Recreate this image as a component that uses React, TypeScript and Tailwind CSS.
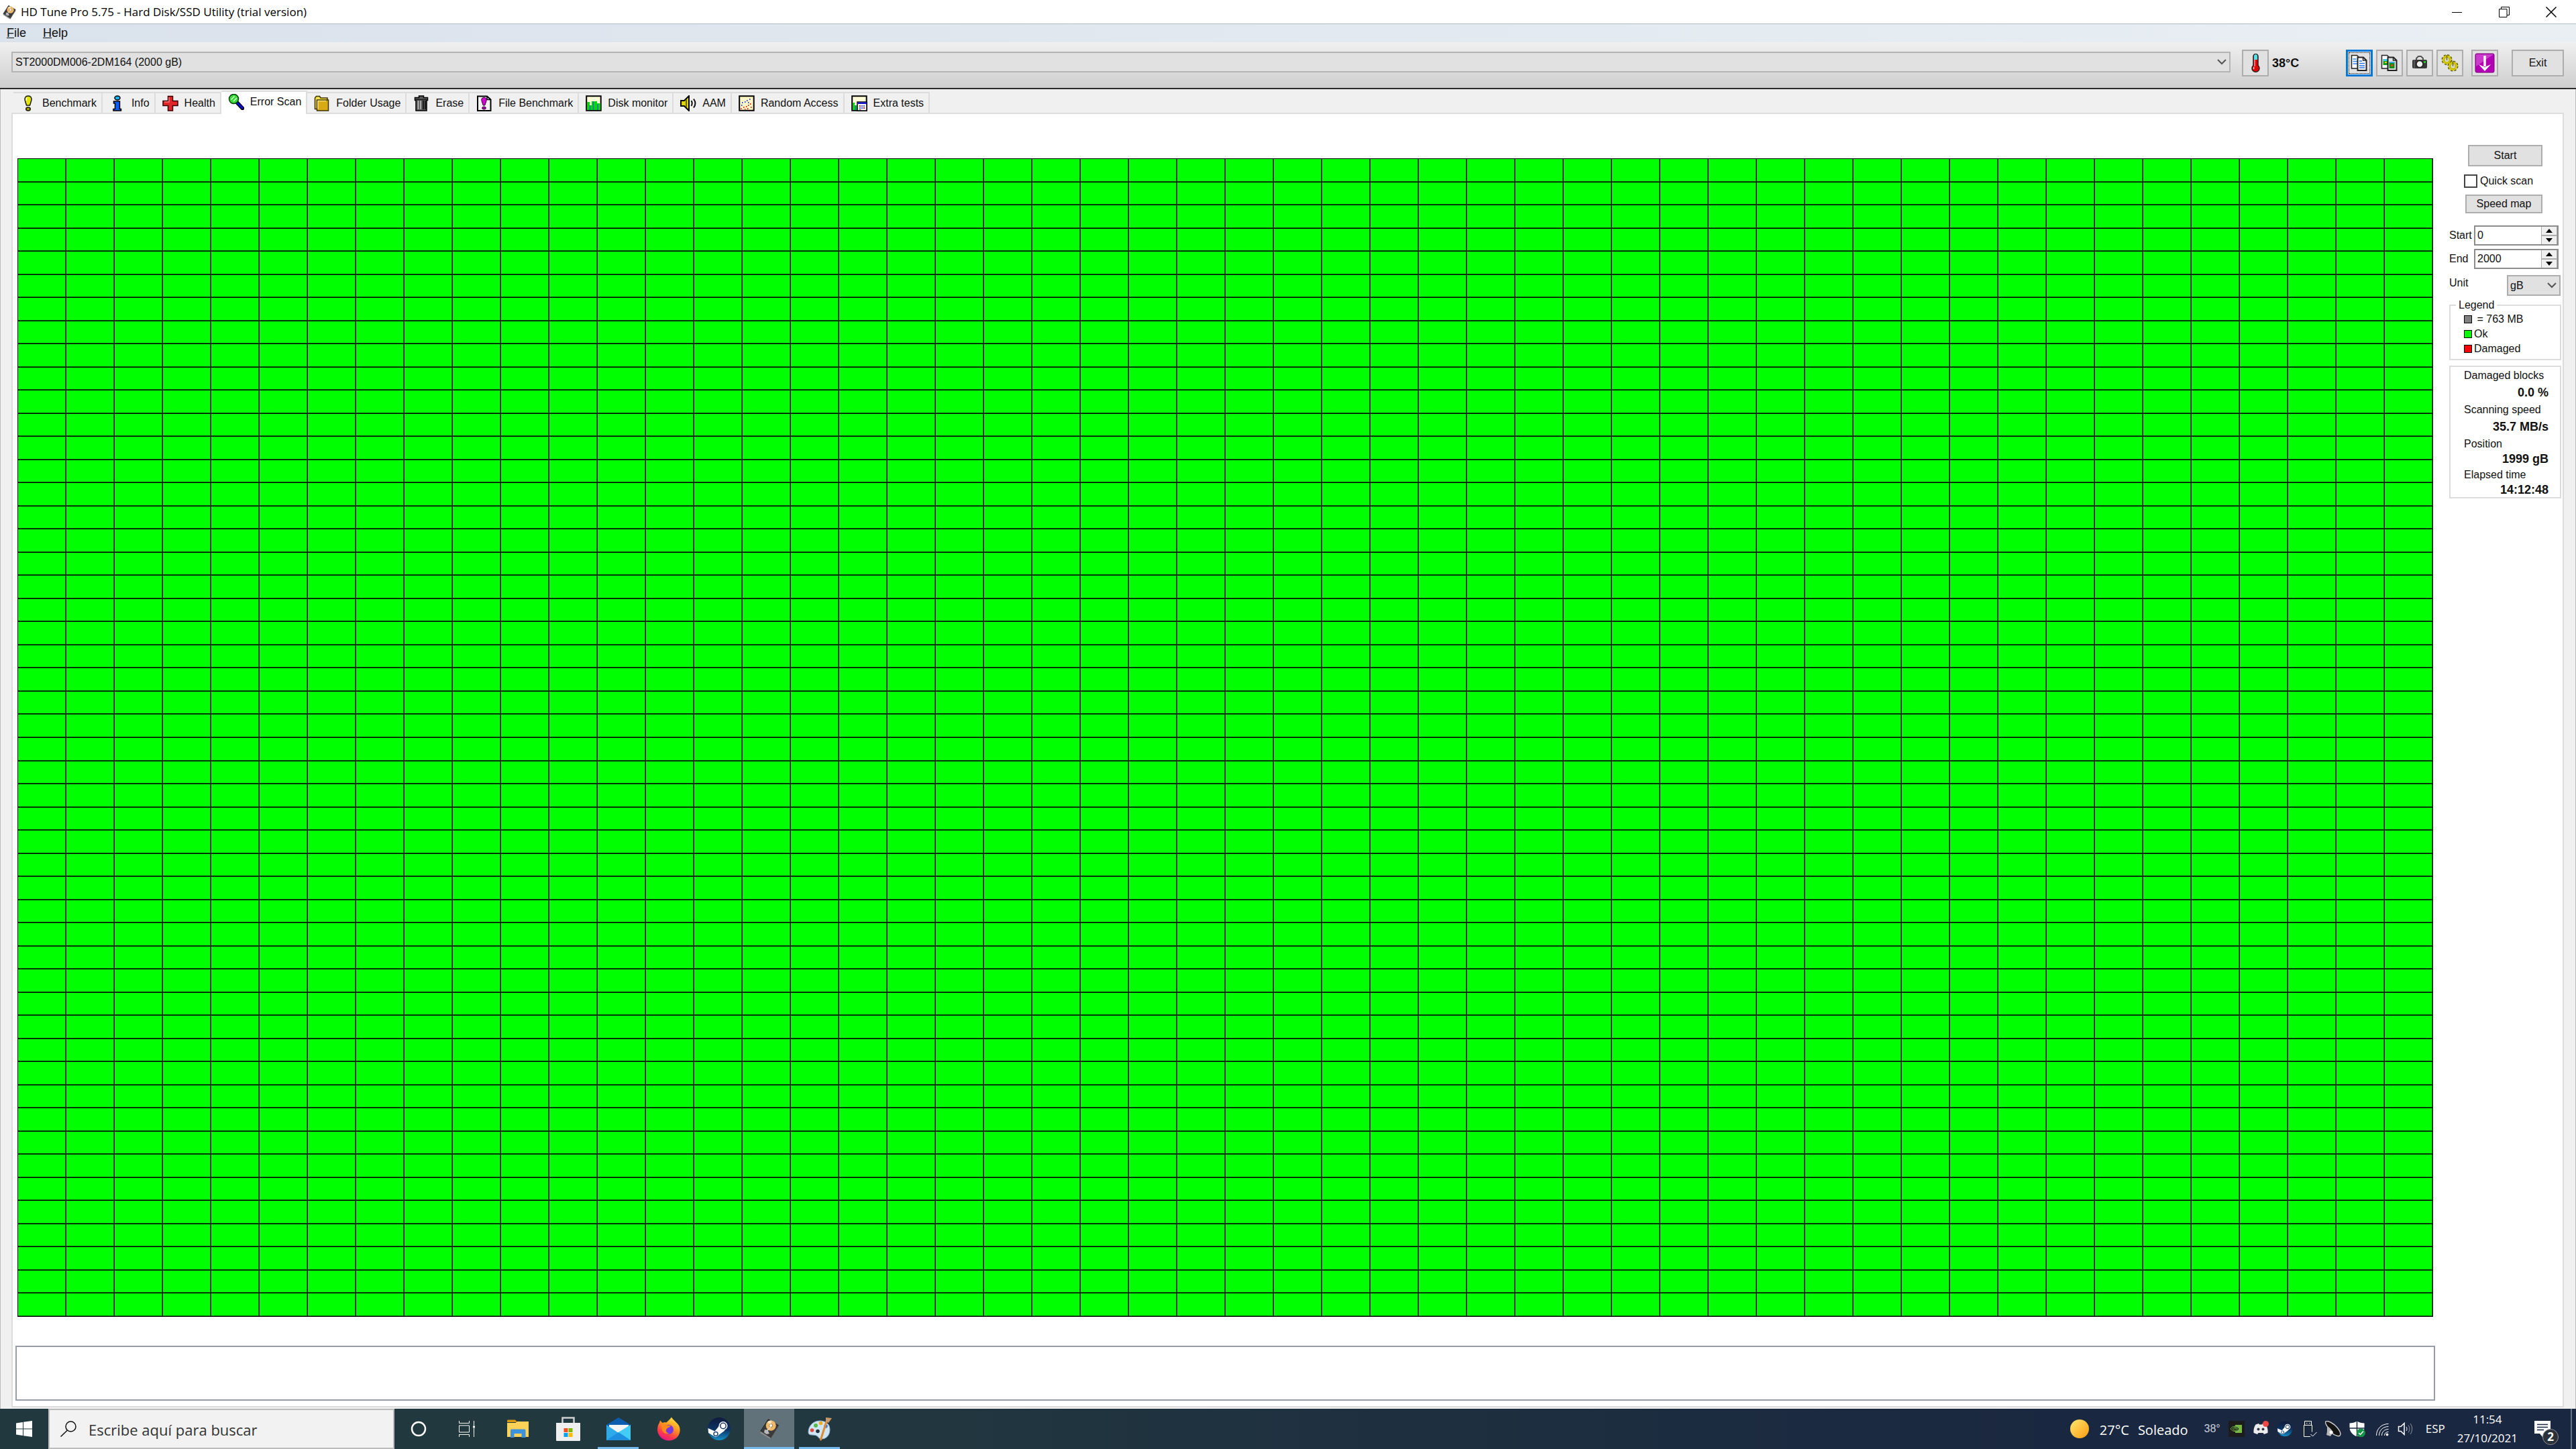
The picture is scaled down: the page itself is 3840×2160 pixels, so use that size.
import { useState, type ReactNode } from "react";
import clsx from "clsx";

const COLS = 50;
const ROWS = 50;

/* ---------- tab icons ---------- */

function ExclamationIcon() {
  return (
    <svg viewBox="0 0 24 24" className="h-6 w-6">
      <path d="M12 1c4 0 5.500 3 4.800 6.500L14.500 15h-5L7.200 7.500C6.500 4 8 1 12 1z" fill="#e6e600" stroke="#1a1a00" strokeWidth="1.500" />
      <path d="M10 3.500c-1 1-1 3-.5 4.500" stroke="#fff" strokeWidth="1.500" fill="none" />
      <ellipse cx="12" cy="20.500" rx="3.200" ry="2.500" fill="#a8a800" stroke="#1a1a00" strokeWidth="1.500" />
    </svg>
  );
}

function InfoIcon() {
  return (
    <svg viewBox="0 0 24 24" className="h-6 w-6">
      <ellipse cx="12" cy="4" rx="4" ry="3" fill="#1ab2f5" stroke="#000" strokeWidth="1.500" />
      <path d="M6.500 9h9v11.500h2V23H6v-2.500h2.500V12h-2z" fill="#0a5cf5" stroke="#000" strokeWidth="1.500" />
    </svg>
  );
}

function HealthIcon() {
  return (
    <svg viewBox="0 0 24 24" className="h-6 w-6">
      <path d="M8.500 1.500h7v7h7.500v7h-7.500v7.500h-7v-7.500H1v-7h7.500z" fill="#e02626" stroke="#3a0000" strokeWidth="1.500" />
      <path d="M10 3v7H3" fill="none" stroke="#ff7070" strokeWidth="1.500" />
    </svg>
  );
}

function SearchScanIcon() {
  return (
    <svg viewBox="0 0 24 24" className="h-6 w-6">
      <path d="M13.500 13l8 8.500" stroke="#000" strokeWidth="5.500" strokeLinecap="round" />
      <path d="M14 13.500l7 7.500" stroke="#0a0ae0" strokeWidth="3" strokeLinecap="round" />
      <circle cx="8.500" cy="7.500" r="7" fill="#35dd35" stroke="#063c06" strokeWidth="1.500" />
      <path d="M4.500 8.500l5-5M8 11l5-5" stroke="#d8ffd8" strokeWidth="1.500" />
    </svg>
  );
}

function FolderTabIcon() {
  return (
    <svg viewBox="0 0 24 24" className="h-6 w-6">
      <path d="M1.500 20.500V4l2-2.500h5L10 4h10v16.500z" fill="#f5e050" stroke="#3c3000" strokeWidth="1.500" />
      <path d="M4.500 7h17v16h-17z" fill="#d9ab12" stroke="#3c3000" strokeWidth="1.500" />
      <path d="M6 20.500V8.500h12" fill="none" stroke="#f8e27a" strokeWidth="1.500" />
    </svg>
  );
}

function TrashIcon() {
  return (
    <svg viewBox="0 0 24 24" className="h-6 w-6">
      <path d="M8.500 1h7v2.500h6v4h-1.500V23H4V7.500H2.500v-4h6z" fill="#5a5a5a" stroke="#000" strokeWidth="1.500" />
      <path d="M7.500 8v13M11 8v13" stroke="#c4c4c4" strokeWidth="1.500" />
      <path d="M15 8v13M18 8v13" stroke="#1c1c1c" strokeWidth="2" />
      <path d="M3.500 6.500h17" stroke="#1a1a1a" strokeWidth="1.500" />
    </svg>
  );
}

function FileBenchIcon() {
  return (
    <svg viewBox="0 0 24 24" className="h-6 w-6">
      <path d="M2 1.500h14l5.500 5V23H2z" fill="#f2f2f2" stroke="#000" strokeWidth="2" />
      <path d="M16 1.500v5h5.500" fill="none" stroke="#000" strokeWidth="1.500" />
      <path d="M11.500 3.500c3.500 0 4.200 2.500 3.500 5L12.800 15h-2.600L8 8.500c-.7-2.500 0-5 3.500-5z" fill="#d400d4" stroke="#300030" />
      <ellipse cx="11.500" cy="19" rx="2.800" ry="2" fill="#b000b0" stroke="#300030" />
    </svg>
  );
}

function MonitorIcon() {
  return (
    <svg viewBox="0 0 24 24" className="h-6 w-6">
      <path d="M1.200 1.200h21.500v21.500H1.200z" fill="#fffbd6" stroke="#000" strokeWidth="2" />
      <path d="M2 10h4v5h3V9h8v3h5v10H2z" fill="#00dc00" />
      <path d="M6.500 15v7M11.500 9v13M18 13v9" stroke="#3a5ae0" strokeWidth="1.500" />
    </svg>
  );
}

function SpeakerTabIcon() {
  return (
    <svg viewBox="0 0 24 24" className="h-6 w-6">
      <path d="M1 8h5l7-7v22l-7-7H1z" fill="#e0d400" stroke="#000" strokeWidth="2" />
      <path d="M9 6v12" stroke="#6a6400" strokeWidth="2" />
      <path d="M16.500 8c1.500 2.500 1.500 5.500 0 8M20 5.500c3 4 3 9 0 13" fill="none" stroke="#111" strokeWidth="2" />
    </svg>
  );
}

function RandomIcon() {
  return (
    <svg viewBox="0 0 24 24" className="h-6 w-6">
      <path d="M1.200 1.200h21.500v21.500H1.200z" fill="#fff8c4" stroke="#000" strokeWidth="2" />
      <path d="M5 10h1.500v2H5zM9 9h1.500v2H9zM12 7h1.500v2H12zM16 5h1.500v2H16zM4 14h1.500v2H4zM14 10h1.500v2H14z" fill="#2a3cf0" />
      <path d="M3 19h1.500v2H3zM7 17h1.500v2H7zM11 16h1.500v2H11zM14 14h1.500v2H14zM17 12h1.500v2H17zM9 20h1.500v1.500H9zM18 17h1.500v2H18zM13 19h1.500v2H13z" fill="#f02020" />
    </svg>
  );
}

function ExtraIcon() {
  return (
    <svg viewBox="0 0 24 24" className="h-6 w-6">
      <path d="M1.200 1.200h21.500v21.500H1.200z" fill="#fffbd6" stroke="#000" strokeWidth="2" />
      <path d="M2 11h3v4h4v7H2z" fill="#00dc00" />
      <path d="M6.500 15v7" stroke="#3a5ae0" strokeWidth="1.500" />
      <path d="M9 10h14v13H9z" fill="#fff" stroke="#000" strokeWidth="1.500" />
      <path d="M9.500 10.500h13.500v2.500H9.500z" fill="#1616d0" />
      <path d="M12 15h2v2h-2zM18 18h2v2h-2zM12 21h2v1h-2z" fill="#e02020" />
      <path d="M15 15h2v2h-2zM18 15h2v2h-2zM12 18h2v2h-2zM15 18h2v2h-2z" fill="#4a5af0" />
    </svg>
  );
}

/* ---------- toolbar icons ---------- */

function DiskIcon({ className }: { className: string }) {
  return (
    <svg viewBox="0 0 36 36" className={className}>
      <path d="M16 2l17 10-13 21L3 22z" fill="#3c3a3a" stroke="#1c1a1a" />
      <path d="M3 22l17 11v2.500L3 25z" fill="#8c8c8c" />
      <path d="M20 33L33 12v3L20 35.500z" fill="#5a5858" />
      <circle cx="20.500" cy="12.500" r="8.500" fill="#f0b968" />
      <path d="M20.500 12.500l-6-6a8.500 8.500 0 0 1 7-2.400z" fill="#ffe6bd" />
      <circle cx="20.500" cy="12.500" r="2.800" fill="#fff" stroke="#9a7a4a" />
      <path d="M10 19l5 1 3 6-5 1-4-3z" fill="#b9b9b9" />
      <path d="M14 21l6-6" stroke="#ddd" strokeWidth="1.500" />
    </svg>
  );
}

function ThermometerIcon() {
  return (
    <svg viewBox="0 0 28 28" className="h-7 w-7">
      <path d="M11 4a3.500 3.500 0 0 1 7 0v13.500a5.500 5.500 0 1 1-7 0z" fill="#e60000" stroke="#222" strokeWidth="1.500" />
      <path d="M12 3.500a2.500 2.500 0 0 1 5 0V9h-5z" fill="#4fe3ee" />
      <path d="M13 9v10" stroke="#ff9c9c" strokeWidth="1.500" />
      <path d="M12 20c-.8 1-.8 2 0 3" stroke="#fff" strokeWidth="1.500" fill="none" />
    </svg>
  );
}

function CopyDocIcon() {
  return (
    <svg viewBox="0 0 28 28" className="h-7 w-7">
      <path d="M2.500 2.500h8l4 4V22h-12z" fill="#fff" stroke="#222" strokeWidth="1.500" />
      <path d="M4.500 8h5M4.500 11.500h7M4.500 15h7" stroke="#2f86ee" strokeWidth="1.500" />
      <path d="M11.500 5.500h8.500l4.500 4.500V25h-13z" fill="#fff" stroke="#222" strokeWidth="2" />
      <path d="M19.500 5.500V10h5" fill="none" stroke="#222" strokeWidth="1.500" />
      <path d="M14 11h4M14 14.500h8M14 18h8M14 21h8" stroke="#2a6cf0" strokeWidth="1.500" />
    </svg>
  );
}

function CopyImageIcon() {
  return (
    <svg viewBox="0 0 28 28" className="h-7 w-7">
      <path d="M2.500 2.500h8l4 4V22h-12z" fill="#fff" stroke="#222" strokeWidth="1.500" />
      <path d="M4.500 8h8v9h-8z" fill="#12a012" />
      <path d="M5 8h7v3H5z" fill="#38c8f0" />
      <path d="M11.500 5.500h8.500l4.500 4.500V25h-13z" fill="#e4e4e4" stroke="#222" strokeWidth="2" />
      <path d="M19.500 5.500V10h5" fill="none" stroke="#222" strokeWidth="1.500" />
      <path d="M13.500 12h8v10h-8z" fill="#0c8c18" />
      <path d="M14 12h7v2h-7z" fill="#38a8f0" />
      <path d="M16 16h3v3h-3z" fill="#e84010" />
      <path d="M7 12h3v2H7z" fill="#f5c518" />
    </svg>
  );
}

function CameraIcon() {
  return (
    <svg viewBox="0 0 28 28" className="h-7 w-7">
      <path d="M9 9V7l3-3h4l3 3v2" fill="none" stroke="#555" strokeWidth="2" />
      <rect x="3" y="9" width="22" height="13" rx="2" fill="#383838" />
      <path d="M6 9v13" stroke="#777" />
      <circle cx="14" cy="15.500" r="5" fill="#f2f2f2" stroke="#222" strokeWidth="1.500" />
      <rect x="20" y="11" width="3" height="3" fill="#20c820" />
    </svg>
  );
}

function GearsIcon() {
  return (
    <svg viewBox="0 0 28 28" className="h-7 w-7">
      <g fill="none">
        <circle cx="9.500" cy="9" r="5.500" stroke="#5c5800" strokeDasharray="2.500 1.800" strokeWidth="5" />
        <circle cx="9.500" cy="9" r="5" stroke="#cfc600" strokeWidth="3.500" />
        <circle cx="18.500" cy="18.500" r="5.500" stroke="#5c5800" strokeDasharray="2.500 1.800" strokeWidth="5" />
        <circle cx="18.500" cy="18.500" r="5" stroke="#cfc600" strokeWidth="3.500" />
      </g>
      <path d="M9.500 2v8M18.500 11v8" stroke="#6e6900" strokeWidth="1.500" />
    </svg>
  );
}

function DownloadIcon() {
  return (
    <svg viewBox="0 0 30 30" className="h-[30px] w-[30px]">
      <rect x="1" y="1" width="28" height="28" rx="2" fill="#b400b4" stroke="#7c007c" />
      <path d="M2 2h26L2 20z" fill="#cc3ccc" />
      <path d="M15 4v16" stroke="#fff" strokeWidth="3.500" />
      <path d="M6 17l9 4 9-4-9 10z" fill="#fff" />
    </svg>
  );
}

function Chevron() {
  return (
    <svg viewBox="0 0 14 14" className="pointer-events-none h-[14px] w-[14px]">
      <path d="M1 4l6 6 6-6" fill="none" stroke="#555" strokeWidth="2" />
    </svg>
  );
}

/* ---------- taskbar icons ---------- */

function ExplorerIcon() {
  return (
    <svg viewBox="0 0 36 36" className="h-9 w-9">
      <path d="M2 6c0-1 .5-1.500 1.500-1.500H14L17 8H2z" fill="#dc9a0a" />
      <path d="M2 9h12.500L17 7h17v23H2z" fill="#ffd257" />
      <path d="M7 31V20.500c0-1.500 1-2 2-2h18.500c1 0 2 .5 2 2V31h-6v-6h-11v6z" fill="#3c93dc" />
    </svg>
  );
}

function StoreIcon() {
  return (
    <svg viewBox="0 0 36 36" className="h-9 w-9">
      <path d="M9.500 12V1.500h17V12" fill="none" stroke="#d0d0d0" strokeWidth="2.500" />
      <path d="M0 9h36v25.500c0 1-.5 1.500-1.500 1.500h-33C.5 36 0 35.500 0 34.500z" fill="#efefef" />
      <path d="M11.500 17h6v6h-6z" fill="#f05022" />
      <path d="M18.500 17h6v6h-6z" fill="#7fba00" />
      <path d="M11.500 24h6v6h-6z" fill="#00a1f1" />
      <path d="M18.500 24h6v6h-6z" fill="#ffb900" />
    </svg>
  );
}

function MailIcon() {
  return (
    <svg viewBox="0 0 36 36" className="h-9 w-9">
      <path d="M0 12L18 1l18 11v6H0z" fill="#0c5cb0" />
      <path d="M4 12h29v12H4z" fill="#f4f4f4" />
      <path d="M0 12l18 12L36 12v23H0z" fill="#2eaaea" />
      <path d="M36 12v23L18 23z" fill="#43ccf4" />
      <path d="M0 35l18-12 18 12z" fill="#1f8fe0" />
    </svg>
  );
}

function FirefoxIcon() {
  return (
    <svg viewBox="0 0 36 36" className="h-9 w-9">
      <defs>
        <linearGradient id="fx" x1="0.800" y1="0" x2="0.300" y2="1">
          <stop offset="0" stopColor="#fff04a" />
          <stop offset="0.400" stopColor="#ff9a1f" />
          <stop offset="0.750" stopColor="#ff3b4a" />
          <stop offset="1" stopColor="#e0148c" />
        </linearGradient>
      </defs>
      <path d="M22 .5c1 3 5 5 7 8 5 4 6 9 5.500 13C33.500 30 26.500 35.500 18 35.500S1.500 29 1 20c0-5 1-8.500 3-11l1-3.500L8.500 9c2-1 4-1 6-.5C17 6 20 3.500 22 .5z" fill="url(#fx)" />
      <circle cx="18" cy="19" r="7" fill="#7a38e0" />
      <path d="M6 12c4-2 8-1 10 1h5c-1 3-5 3-6 5-3 3 0 7 4 6-5 3-10 0-11-5-1-3 0-5-2-7z" fill="#ff8a1c" />
    </svg>
  );
}

function SteamIcon({ className }: { className: string }) {
  return (
    <svg viewBox="0 0 36 36" className={className}>
      <defs>
        <linearGradient id="steam" x1="0" y1="0" x2="0" y2="1">
          <stop offset="0" stopColor="#111a3c" />
          <stop offset="0.550" stopColor="#0c3566" />
          <stop offset="1" stopColor="#1490c8" />
        </linearGradient>
      </defs>
      <circle cx="18" cy="18" r="17" fill="url(#steam)" />
      <path d="M1.500 17l10 4.500 7-8.500 8 7.500-9 6.500a5 5 0 0 1-8 1.500L2 24z" fill="#fff" />
      <circle cx="24" cy="13.500" r="6.500" fill="#fff" />
      <circle cx="24" cy="13.500" r="4.200" fill="none" stroke="#1d3a66" strokeWidth="1.500" />
      <circle cx="13" cy="25.500" r="3" fill="none" stroke="#1d4a7c" strokeWidth="1.500" />
    </svg>
  );
}

function PaintIcon() {
  return (
    <svg viewBox="0 0 36 36" className="h-9 w-9">
      <path d="M18 6c9 0 15 5 15 13s-5 14-12 14c-5 0-5-4-8-5-4-2-12 1-12-5C1 14 8 6 18 6z" fill="#cfe5f4" stroke="#8fb4cf" />
      <circle cx="6.500" cy="20" r="2.800" fill="#e04a3a" />
      <circle cx="12" cy="13" r="3" fill="#58b848" />
      <circle cx="19.500" cy="9.500" r="2.800" fill="#f0a820" />
      <circle cx="27" cy="14" r="2.800" fill="#3a7ae0" />
      <circle cx="15" cy="21.500" r="2.800" fill="#24303c" />
      <path d="M28 7L19.500 34" stroke="#e08a2c" strokeWidth="3" strokeLinecap="round" />
      <path d="M27 1l9 1-5 7-4-1.500z" fill="#c89868" />
    </svg>
  );
}

/* ---------- data ---------- */

const tabs: { label: string; icon: ReactNode }[] = [
  { label: "Benchmark", icon: <ExclamationIcon /> },
  { label: "Info", icon: <InfoIcon /> },
  { label: "Health", icon: <HealthIcon /> },
  { label: "Error Scan", icon: <SearchScanIcon /> },
  { label: "Folder Usage", icon: <FolderTabIcon /> },
  { label: "Erase", icon: <TrashIcon /> },
  { label: "File Benchmark", icon: <FileBenchIcon /> },
  { label: "Disk monitor", icon: <MonitorIcon /> },
  { label: "AAM", icon: <SpeakerTabIcon /> },
  { label: "Random Access", icon: <RandomIcon /> },
  { label: "Extra tests", icon: <ExtraIcon /> },
];

const stats = [
  { label: "Damaged blocks", value: "0.0 %", tight: false },
  { label: "Scanning speed", value: "35.7 MB/s", tight: false },
  { label: "Position", value: "1999 gB", tight: true },
  { label: "Elapsed time", value: "14:12:48", tight: true },
];

/* ---------- pieces ---------- */

function TitleBar() {
  return (
    <header className="flex h-[35px] items-center bg-white pr-[2px] pl-[3px]">
      <DiskIcon className="h-[22px] w-[22px]" />
      <h1 className="ml-[6px] flex-1 font-['Open_Sans',sans-serif] text-[17px] leading-[22px] text-black">
        HD Tune Pro 5.75 - Hard Disk/SSD Utility (trial version)
      </h1>
      <button aria-label="Minimize" className="flex h-full w-[70px] items-center justify-center">
        <svg viewBox="0 0 16 16" className="h-4 w-4">
          <path d="M0 8.500h15" stroke="#000" />
        </svg>
      </button>
      <button aria-label="Restore" className="flex h-full w-[70px] items-center justify-center">
        <svg viewBox="0 0 16 16" className="h-4 w-4" fill="none" stroke="#000">
          <path d="M.5 3.500h11.500v12H.5zM3.500 3.500v-3h12v12H12" />
        </svg>
      </button>
      <button aria-label="Close" className="flex h-full w-[70px] items-center justify-center">
        <svg viewBox="0 0 16 16" className="h-4 w-4">
          <path d="M.5.5l15 15M15.500.5l-15 15" stroke="#000" strokeWidth="1.500" />
        </svg>
      </button>
    </header>
  );
}

function ToolButton({ label, active, children }: { label: string; active?: boolean; children: ReactNode }) {
  return (
    <button
      aria-label={label}
      className={clsx(
        "flex h-10 w-10 items-center justify-center bg-[#e1e1e1]",
        active
          ? "border-3 border-[#0078d7] outline-1 -outline-offset-5 outline-dotted outline-black"
          : "border-2 border-[#adadad]"
      )}
    >
      {children}
    </button>
  );
}

function Toolbar() {
  return (
    <div className="flex h-[70px] items-start border-b-2 border-[#2a2a2a] bg-linear-to-b from-[#f0f0f0] to-[#cecece] pt-[11px] pr-[18px] pl-[17px]">
      <div className="relative mt-[3px] flex-1">
        <select
          aria-label="Drive"
          className="h-[31px] w-full appearance-none border-2 border-[#b4b4b4] bg-[#e1e1e1] pl-1 text-[16px]"
        >
          <option>ST2000DM006-2DM164 (2000 gB)</option>
        </select>
        <span className="pointer-events-none absolute top-2 right-[6px]">
          <Chevron />
        </span>
      </div>
      <div className="ml-[17px] flex w-[155px] items-center">
        <ToolButton label="Temperature">
          <ThermometerIcon />
        </ToolButton>
        <span className="ml-[5px] text-[18px] font-bold">38°C</span>
      </div>
      <div className="flex gap-[5px]">
        <ToolButton label="Copy info" active>
          <CopyDocIcon />
        </ToolButton>
        <ToolButton label="Copy screenshot">
          <CopyImageIcon />
        </ToolButton>
        <ToolButton label="Save screenshot">
          <CameraIcon />
        </ToolButton>
        <ToolButton label="Options">
          <GearsIcon />
        </ToolButton>
      </div>
      <div className="ml-[12px] flex gap-[20px]">
        <ToolButton label="Save">
          <DownloadIcon />
        </ToolButton>
        <button className="h-10 w-[78px] border-2 border-[#adadad] bg-[#e1e1e1] text-[16px]">Exit</button>
      </div>
    </div>
  );
}

function TabBar({ selected, onSelect }: { selected: string; onSelect: (t: string) => void }) {
  return (
    <nav className="flex h-[35px] items-end pl-[3px]">
      {tabs.map((t) => (
        <button
          key={t.label}
          onClick={() => onSelect(t.label)}
          className={clsx(
            "flex items-center gap-[9px] border-t-2 border-r-2 border-[#dcdcdc] pr-[7px] pl-[10px] text-[16px]",
            selected === t.label ? "relative -mb-[2px] h-[35px] bg-white pb-1" : "h-[31px] bg-[#f0f0f0]"
          )}
        >
          {t.icon}
          <span>{t.label}</span>
        </button>
      ))}
    </nav>
  );
}

function BlockMap() {
  return (
    <div className="mx-[3px] grid flex-1 grid-cols-[repeat(50,minmax(0,1fr))] grid-rows-[repeat(50,minmax(0,1fr))] gap-px bg-black p-px">
      {Array.from({ length: COLS * ROWS }, (_, i) => (
        <div key={i} className="border-r border-b border-[#006a00] bg-[#00ff00]" />
      ))}
    </div>
  );
}

function Spinner({ id, label, value, onChange }: { id: string; label: string; value: number; onChange: (n: number) => void }) {
  return (
    <div className="flex h-[30px] items-center">
      <label htmlFor={id} className="w-[37px]">
        {label}
      </label>
      <div className="flex h-[30px] w-[126px] border-2 border-[#8c8c8c] bg-white">
        <input
          id={id}
          value={value}
          onChange={(e) => onChange(Number(e.target.value) || 0)}
          className="w-full min-w-0 flex-1 pl-[3px] outline-none"
        />
        <div className="flex w-6 shrink-0 flex-col gap-[2px] bg-[#adadad] px-px">
          <button aria-label={`${label} up`} onClick={() => onChange(value + 1)} className="flex flex-1 items-center justify-center bg-[#f0f0f0]">
            <svg viewBox="0 0 10 6" className="h-[6px] w-[10px]">
              <path d="M0 6l5-6 5 6z" />
            </svg>
          </button>
          <button aria-label={`${label} down`} onClick={() => onChange(value - 1)} className="flex flex-1 items-center justify-center bg-[#f0f0f0]">
            <svg viewBox="0 0 10 6" className="h-[6px] w-[10px]">
              <path d="M0 0l5 6 5-6z" />
            </svg>
          </button>
        </div>
      </div>
    </div>
  );
}

function LegendRow({ color, label }: { color: string; label: string }) {
  return (
    <li className="flex h-[22px] items-center gap-[3px]">
      <span className={clsx("h-3 w-3 border border-black", color)} />
      <span className="whitespace-pre">{label}</span>
    </li>
  );
}

function Sidebar() {
  const [start, setStart] = useState(0);
  const [end, setEnd] = useState(2000);

  return (
    <aside className="mr-[2px] ml-[21px] w-[167px] shrink-0 pt-[46px] text-[16px] leading-5">
      <button className="ml-[28px] block h-8 w-[111px] border-2 border-[#adadad] bg-[#e1e1e1]">Start</button>
      <label className="mt-3 ml-[22px] flex h-5 items-center gap-1">
        <input type="checkbox" className="h-5 w-5 appearance-none border-2 border-[#444] bg-white" />
        Quick scan
      </label>
      <button className="mt-[10px] ml-[24px] block h-7 w-[115px] border-2 border-[#adadad] bg-[#e1e1e1] leading-6">Speed map</button>

      <div className="mt-[18px] flex flex-col gap-[5px]">
        <Spinner id="start" label="Start" value={start} onChange={setStart} />
        <Spinner id="end" label="End" value={end} onChange={setEnd} />
      </div>
      <div className="mt-[9px] flex h-[31px] items-start justify-between pr-px">
        <label htmlFor="unit" className="pt-[2px]">
          Unit
        </label>
        <div className="relative">
          <select id="unit" className="h-[31px] w-20 appearance-none border-2 border-[#adadad] bg-[#e1e1e1] pl-[3px]">
            <option>gB</option>
            <option>mB</option>
          </select>
          <span className="pointer-events-none absolute top-2 right-[6px]">
            <Chevron />
          </span>
        </div>
      </div>

      <fieldset className="mt-1 border-2 border-[#dcdcdc] pb-1 pl-5">
        <legend className="-ml-[12px] px-1">Legend</legend>
        <ul>
          <LegendRow color="bg-[#808080]" label=" = 763 MB" />
          <LegendRow color="bg-[#00ff00]" label="Ok" />
          <LegendRow color="bg-[#ff0000]" label="Damaged" />
        </ul>
      </fieldset>

      <dl className="mt-2 border-2 border-[#dcdcdc] pr-[17px] pl-5">
        {stats.map((s) => (
          <div key={s.label}>
            <dt className="leading-[25px]">{s.label}</dt>
            <dd className={clsx("text-right text-[18px] font-bold", s.tight ? "leading-[21px]" : "leading-[26px]")}>{s.value}</dd>
          </div>
        ))}
      </dl>
    </aside>
  );
}

function TaskButton({ label, running, active, children }: { label: string; running?: boolean; active?: boolean; children: ReactNode }) {
  return (
    <button
      aria-label={label}
      className={clsx("relative flex h-full w-[75px] items-center justify-center", active && "bg-[#62727a]")}
    >
      {children}
      {running && <span className={clsx("absolute bottom-0 h-[3px] bg-[#76b9ed]", active ? "inset-x-0" : "inset-x-[7px]")} />}
    </button>
  );
}

function TrayIcons() {
  return (
    <div className="flex items-center gap-3">
      <svg viewBox="0 0 24 24" className="h-6 w-6">
        <path d="M0 0h24v24H0z" fill="#1c1c1c" />
        <path d="M10 6h10v12H10z" fill="#76b843" />
        <path d="M3 12c3-4.500 9-5.500 13 0-3 4.500-9 5-13 0z" fill="#1c1c1c" stroke="#76b843" />
        <path d="M6 12c2-3 6-3 7.500 0-2 3-5.500 2.500-7.500 0zM8.500 12c1-1.500 2.500-1.500 3 0" fill="none" stroke="#76b843" />
      </svg>
      <svg viewBox="0 0 24 24" className="h-6 w-6">
        <path d="M4.500 5.500L9 4l1 1.500h4L15 4l4.500 1.500C22 9 23 13.500 22.500 18L17 20l-1.500-2h-7L7 20l-5.500-2C1 13.500 2 9 4.500 5.500z" fill="#ececec" />
        <circle cx="8.500" cy="12.500" r="2" fill="#303848" />
        <circle cx="15.500" cy="12.500" r="2" fill="#303848" />
        <circle cx="19.500" cy="4.500" r="4.500" fill="#f04747" />
      </svg>
      <SteamIcon className="h-6 w-6" />
      <svg viewBox="0 0 24 24" className="h-6 w-6" fill="none" stroke="#fff">
        <path d="M5.500.5h10v6h-10zM4.500 6.500h12v10M14 23.500H4.500v-17" />
        <path d="M8 3.500h1.500M12 3.500h1.500M14.500 20l3 3 6-6" />
      </svg>
      <svg viewBox="0 0 24 24" className="h-6 w-6">
        <path d="M1 1c3-2 12 3 17 9 4 5 6 10 4 12s-9-1-12-4L3 8C1 5 0 2 1 1z" fill="#141414" stroke="#c8c8c8" strokeWidth="1.500" />
        <path d="M3 8c3 1 6 4 9 9l-4 6-6-2 1-5z" fill="#b8b8b8" />
        <circle cx="9" cy="17" r="2.500" fill="#fff" />
      </svg>
      <svg viewBox="0 0 24 24" className="h-6 w-6">
        <path d="M11.500.5c3 2 7 3 11 3V10c0 6-4 11-11 13.500C5 21 .5 16 .5 10V3.500c4 0 8-1 11-3z" fill="#fff" />
        <path d="M11.500 0v24M0 11h24" stroke="#1b2841" strokeWidth="1.500" />
        <circle cx="17.500" cy="18" r="6.500" fill="#159447" />
        <path d="M14 18l2.500 2.500 4.500-5" fill="none" stroke="#fff" strokeWidth="1.500" />
      </svg>
      <svg viewBox="0 0 24 24" className="h-6 w-6" fill="none" stroke="#fff">
        <path d="M4.500 22C4.500 12 12 4.500 22.500 4.500M8.500 22c0-8 6-13.500 14-13.500" />
        <path d="M12.500 22c0-5.500 4-9.500 10-9.500M16.500 22c0-3 2-5.500 6-5.500" />
        <circle cx="20.500" cy="20.500" r="1.500" fill="#fff" />
      </svg>
      <svg viewBox="0 0 24 24" className="h-6 w-6" fill="none" stroke="#fff">
        <path d="M1.500 8.500h3.500l5-5v17l-5-5H1.500z" strokeWidth="1.500" />
        <path d="M13 9c1.300 2 1.300 4 0 6" />
        <path d="M16 6.500c2.500 3.500 2.500 7.500 0 11M19 4c3.500 5 3.500 11 0 16" opacity="0.500" />
      </svg>
    </div>
  );
}

function Taskbar() {
  return (
    <footer className="flex h-[60px] items-center bg-linear-to-r from-[#22383f] from-30% to-[#1a2740] to-80% font-['Open_Sans',sans-serif] text-white">
      <button aria-label="Inicio" className="flex h-full w-[72px] items-center justify-center">
        <svg viewBox="0 0 24 24" className="h-6 w-6" fill="#fff">
          <path d="M0 3.500L10 2v9.500H0zM11 1.800L24 0v11.500H11zM0 12.500h10V22L0 20.500zM11 12.500h13V24l-13-1.800z" />
        </svg>
      </button>
      <div className="flex h-full w-[516px] items-center border-2 border-[#bcbcbc] bg-[#f2f2f2] pl-4">
        <svg viewBox="0 0 24 24" className="h-6 w-6" fill="none" stroke="#111" strokeWidth="1.500">
          <circle cx="15.500" cy="8.500" r="7.500" />
          <path d="M10.500 14L.5 23.500" />
        </svg>
        <input
          aria-label="Buscar"
          placeholder="Escribe aquí para buscar"
          className="ml-[18px] flex-1 pt-[2px] text-[22px] text-[#222] outline-none placeholder:text-[#333]"
        />
      </div>
      <button aria-label="Cortana" className="flex h-full w-[72px] items-center justify-center">
        <svg viewBox="0 0 24 24" className="h-6 w-6">
          <circle cx="12" cy="12" r="10" fill="none" stroke="#fff" strokeWidth="2.500" />
        </svg>
      </button>
      <button aria-label="Vista de tareas" className="mr-[2px] flex h-full w-[72px] items-center justify-center">
        <svg viewBox="0 0 24 24" className="h-6 w-6" fill="none" stroke="#fff">
          <path d="M.5 0v3.500h15V0M.5 24v-3.500h15V24M.5 7h15v10H.5zM22.500 0v7M22.500 11v13" />
          <path d="M21 7.500h3v3h-3z" fill="#fff" stroke="none" />
        </svg>
      </button>
      <TaskButton label="Explorador de archivos">
        <ExplorerIcon />
      </TaskButton>
      <TaskButton label="Microsoft Store">
        <StoreIcon />
      </TaskButton>
      <TaskButton label="Correo" running>
        <MailIcon />
      </TaskButton>
      <TaskButton label="Firefox">
        <FirefoxIcon />
      </TaskButton>
      <TaskButton label="Steam">
        <SteamIcon className="h-9 w-9" />
      </TaskButton>
      <TaskButton label="HD Tune Pro" running active>
        <DiskIcon className="h-8 w-8" />
      </TaskButton>
      <TaskButton label="Paint" running>
        <PaintIcon />
      </TaskButton>

      <div className="ml-auto flex h-full items-center">
        <button className="flex h-full items-center text-[20px]">
          <svg viewBox="0 0 28 28" className="h-7 w-7">
            <defs>
              <linearGradient id="sun" x1="0" y1="0" x2="1" y2="1">
                <stop offset="0" stopColor="#ffe870" />
                <stop offset="1" stopColor="#ff9a10" />
              </linearGradient>
            </defs>
            <circle cx="14" cy="14" r="14" fill="url(#sun)" />
          </svg>
          <span className="mt-[3px] ml-4">27°C</span>
          <span className="mt-[3px] ml-[13px]">Soleado</span>
        </button>
        <span className="mr-3 ml-6 font-['Liberation_Sans',sans-serif] text-[16px] text-[#c9cedb]">38°</span>
        <TrayIcons />
        <button className="h-full px-[18px] text-[17px]">ESP</button>
        <time className="pr-[7px] text-center text-[17px] leading-7">
          11:54
          <br />
          27/10/2021
        </time>
        <button aria-label="Notificaciones" className="relative flex h-full w-[72px] items-center pl-[18px]">
          <svg viewBox="0 0 24 24" className="h-6 w-6">
            <path d="M0 0h24v19h-8l-4 5-4-5H0z" fill="#fff" />
            <path d="M4 5.500h16M4 9.500h16M4 13.500h10" stroke="#1a2740" strokeWidth="1.500" />
          </svg>
          <span className="absolute right-[18px] bottom-[6px] flex h-6 w-6 items-center justify-center rounded-full border border-[#8a8f98] bg-[#2c3138] text-[17px] font-bold">
            2
          </span>
        </button>
        <span className="h-full w-2 border-l-2 border-[#6a7386]" />
      </div>
    </footer>
  );
}

export default function App() {
  const [tab, setTab] = useState("Error Scan");

  return (
    <div className="flex h-screen flex-col bg-[#f0f0f0] font-['Liberation_Sans',Arial,sans-serif] text-[#111]">
      <TitleBar />
      <div className="flex h-7 items-center gap-[25px] border-t border-[#b4bcc6] bg-linear-to-r from-[#dae2ec] to-[#e9eff3] pl-[10px] text-[18px]">
        <button>
          <u>F</u>ile
        </button>
        <button>
          <u>H</u>elp
        </button>
      </div>
      <Toolbar />
      <main className="flex min-h-0 flex-1 flex-col border-x border-[#bdbdbd] pr-[17px] pb-[2px] pl-4">
        <TabBar selected={tab} onSelect={setTab} />
        <section className="flex min-h-0 flex-1 border-2 border-[#dcdcdc] bg-white">
          <div className="flex min-w-0 flex-1 flex-col pt-[66px] pb-2 pl-1">
            <BlockMap />
            <textarea
              aria-label="Log"
              readOnly
              className="mt-[43px] block h-[82px] w-full shrink-0 resize-none border-2 border-[#979da6] bg-white outline-none"
            />
          </div>
          <Sidebar />
        </section>
      </main>
      <Taskbar />
    </div>
  );
}
